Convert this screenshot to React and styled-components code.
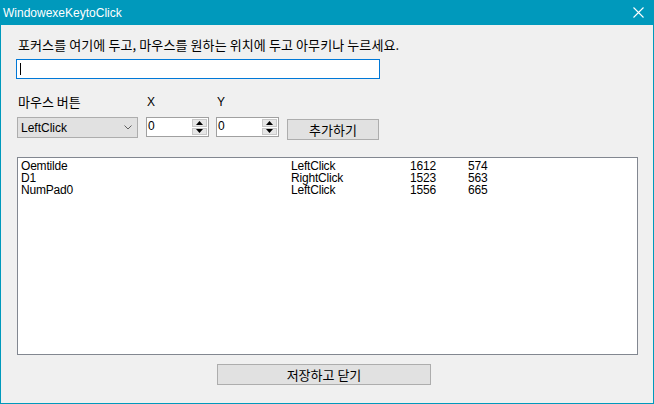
import React from 'react';
import styled, { createGlobalStyle } from 'styled-components';

const GlobalStyle = createGlobalStyle`
  html, body { margin: 0; padding: 0; background: #f0f0f0; }
  body { font-family: "Liberation Sans", "Noto Sans CJK KR", sans-serif; }
`;

const Window = styled.div`
  width: 654px;
  height: 404px;
  box-sizing: border-box;
  background: #f0f0f0;
  border: 1px solid #0099bc;
  border-top: none;
  display: flex;
  flex-direction: column;
`;

const TitleBar = styled.div`
  height: 25px;
  background: #0099bc;
  color: #ffffff;
  display: flex;
  align-items: center;
  justify-content: space-between;
  padding: 0 10px 0 3px;
  font-size: 12px;
  margin: 0 -1px;
`;

const Body = styled.div`
  padding: 12px 15px 0 15px;
  display: flex;
  flex-direction: column;
`;

const Prompt = styled.div`
  font-family: "Noto Sans CJK KR", sans-serif;
  font-size: 13px;
  line-height: 16px;
  color: #000;
  padding-left: 2px;
  letter-spacing: 0.1px;
`;

const FocusBox = styled.div`
  margin-top: 6px;
  width: 364px;
  height: 20px;
  box-sizing: border-box;
  border: 1px solid #0078d7;
  background: #fff;
  display: flex;
  align-items: center;
  padding-left: 3px;
`;

const Caret = styled.span`
  width: 1px;
  height: 12px;
  background: #000;
`;

const Controls = styled.div`
  margin-top: 15px;
  display: grid;
  grid-template-columns: 130px 70px 71px 92px;
  row-gap: 7px;
  align-items: start;
`;

const FieldLabel = styled.div`
  font-family: ${p => (p.$kr ? '"Noto Sans CJK KR", sans-serif' : '"Liberation Sans", sans-serif')};
  font-size: ${p => (p.$kr ? 13 : 12)}px;
  line-height: 16px;
  padding-left: ${p => p.$pad || 2}px;
`;

const Combo = styled.div`
  margin-left: 1px;
  width: 121px;
  height: 21px;
  box-sizing: border-box;
  border: 1px solid #adadad;
  background: #e1e1e1;
  display: flex;
  align-items: center;
  justify-content: space-between;
  padding: 0 5px 0 3px;
  font-size: 12px;
`;

const Spin = styled.div`
  width: 63px;
  height: 20px;
  box-sizing: border-box;
  border: 1px solid #a0a0a0;
  background: #fff;
  display: flex;
  align-items: stretch;
`;

const SpinValue = styled.div`
  flex: 1;
  font-size: 12px;
  line-height: 16px;
  padding-left: 1px;
`;

const SpinButtons = styled.div`
  width: 15px;
  margin: 1px 1px 1px 0;
  display: flex;
  flex-direction: column;
  gap: 1px;
`;

const SpinArrow = styled.div`
  flex: 1;
  background: #e6e6e6;
  border: 1px solid #c8c8c8;
  display: flex;
  align-items: center;
  justify-content: center;
`;

const Button = styled.div`
  height: 21px;
  box-sizing: border-box;
  border: 1px solid #adadad;
  background: #e1e1e1;
  display: flex;
  align-items: center;
  justify-content: center;
  font-family: "Noto Sans CJK KR", sans-serif;
  font-size: 13px;
  width: ${p => p.$w}px;
  margin-top: ${p => p.$top || 0}px;
  margin-left: ${p => p.$left || 0}px;
`;

const List = styled.div`
  margin-top: 17px;
  margin-left: 1px;
  width: 621px;
  height: 198px;
  box-sizing: border-box;
  border: 1px solid #828790;
  background: #fff;
  padding: 2px 0 0 3px;
`;

const Row = styled.div`
  display: grid;
  grid-template-columns: 270px 119px 58px 1fr;
  height: 12px;
`;

const Cell = styled.div`
  font-size: 12px;
  line-height: 12px;
  height: 12px;
  letter-spacing: -0.2px;
  white-space: nowrap;
`;

const rows = [
  ['Oemtilde', 'LeftClick', '1612', '574'],
  ['D1', 'RightClick', '1523', '563'],
  ['NumPad0', 'LeftClick', '1556', '665'],
];

const Up = () => (
  <svg width="7" height="4" viewBox="0 0 7 4"><path d="M3.5 0 L7 4 L0 4 Z" fill="#000" /></svg>
);
const Down = () => (
  <svg width="7" height="4" viewBox="0 0 7 4"><path d="M0 0 L7 0 L3.5 4 Z" fill="#000" /></svg>
);

const SpinBox = ({ value }) => (
  <Spin>
    <SpinValue>{value}</SpinValue>
    <SpinButtons>
      <SpinArrow><Up /></SpinArrow>
      <SpinArrow><Down /></SpinArrow>
    </SpinButtons>
  </Spin>
);

export default function App() {
  return (
    <>
      <GlobalStyle />
      <Window>
        <TitleBar>
          <span>WindowexeKeytoClick</span>
          <svg width="11" height="11" viewBox="0 0 11 11">
            <path d="M0.5 0.5 L10.5 10.5 M10.5 0.5 L0.5 10.5" stroke="#fff" strokeWidth="1.1" />
          </svg>
        </TitleBar>
        <Body>
          <Prompt>포커스를 여기에 두고, 마우스를 원하는 위치에 두고 아무키나 누르세요.</Prompt>
          <FocusBox><Caret /></FocusBox>
          <Controls>
            <FieldLabel $kr>마우스 버튼</FieldLabel>
            <FieldLabel $pad={1}>X</FieldLabel>
            <FieldLabel $pad={1}>Y</FieldLabel>
            <div />
            <Combo>
              <span>LeftClick</span>
              <svg width="8" height="5" viewBox="0 0 8 5">
                <path d="M0.5 0.5 L4 4 L7.5 0.5" fill="none" stroke="#606060" strokeWidth="1" />
              </svg>
            </Combo>
            <SpinBox value="0" />
            <SpinBox value="0" />
            <Button $w={92} $top={2}>추가하기</Button>
          </Controls>
          <List>
            {rows.map(r => (
              <Row key={r[0]}>
                {r.map((c, i) => <Cell key={i}>{c}</Cell>)}
              </Row>
            ))}
          </List>
          <Button $w={214} $top={9} $left={201}>저장하고 닫기</Button>
        </Body>
      </Window>
    </>
  );
}
